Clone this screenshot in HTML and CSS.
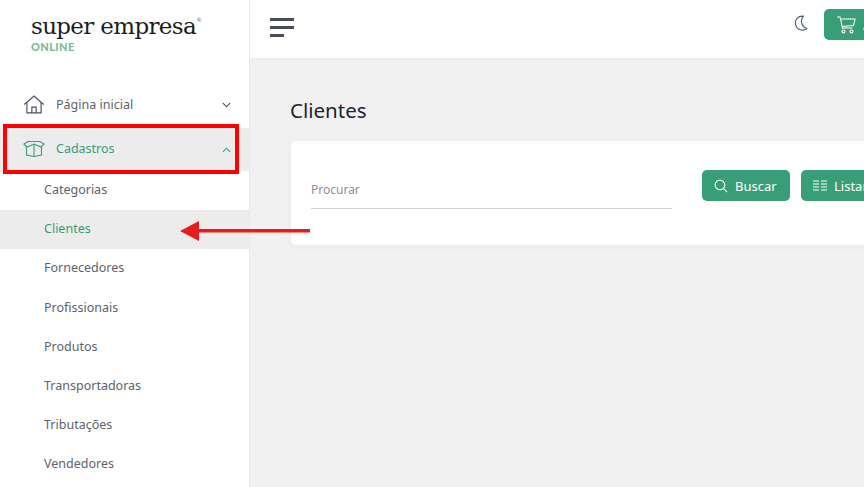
FILE: index.html
```html
<!DOCTYPE html>
<html>

<head>
    <title>Clientes</title>
    <meta charset="utf-8">
    <link rel="stylesheet" href="styles.css">
</head>

<body>

    <aside class="sidebar">
        <div class="logo">
            <div class="logo_nome">super empresa<sup>®</sup></div>
            <div class="logo_sub">ONLINE</div>
        </div>

        <nav class="menu">
            <a class="menu_item inicio">
                <svg class="menu_icon" viewBox="0 0 20 18" fill="none" stroke="#4a4f63" stroke-width="1.1">
                    <path d="M.8 9 10 1l9.200 8" />
                    <path d="M3.300 7v10h13.400V7" />
                    <path d="M8 17v-5.500h4V17" />
                </svg>
                <span>Página inicial</span>
                <svg class="seta" viewBox="0 0 10 6" fill="none" stroke="#444" stroke-width="1.2">
                    <path d="M1 1l4 4 4-4" />
                </svg>
            </a>
            <a class="menu_item aberto">
                <svg class="menu_icon" viewBox="0 0 22 18" fill="none" stroke="#3a9d78" stroke-width="1.1">
                    <path d="M3.500 7v8.500L11 17l7.500-1.500V7" />
                    <path d="M11 4.500V17" />
                    <path d="M1 4.500 5 2h12l4 2.500-3 3-7-3-7 3z" />
                </svg>
                <span>Cadastros</span>
                <svg class="seta" viewBox="0 0 10 6" fill="none" stroke="#3a9d78" stroke-width="1.2">
                    <path d="M1 5l4-4 4 4" />
                </svg>
            </a>
            <a class="sub_item">Categorias</a>
            <a class="sub_item valgt">Clientes</a>
            <a class="sub_item">Fornecedores</a>
            <a class="sub_item">Profissionais</a>
            <a class="sub_item">Produtos</a>
            <a class="sub_item">Transportadoras</a>
            <a class="sub_item">Tributações</a>
            <a class="sub_item">Vendedores</a>
        </nav>
    </aside>

    <div class="conteudo">
        <header class="topo">
            <div class="burger">
                <i></i>
                <i></i>
                <i class="curta"></i>
            </div>
            <svg class="lua" viewBox="0 0 14 16" fill="none" stroke="#4a5a78" stroke-width="1.1">
                <path d="M9.500 1.200A7 7 0 1 0 12.800 13.500 7.500 7.500 0 0 1 9.500 1.200z" />
            </svg>
            <button class="btn btn_carrinho">
                <svg class="btn_icon cart" viewBox="0 0 20 18" fill="none" stroke="#fff" stroke-width="1.1">
                    <path d="M1 1h3l2.500 11h10" />
                    <path d="M4.500 3H19l-1.500 6.500-11 1" />
                    <circle cx="7.500" cy="15.500" r="1.500" />
                    <circle cx="15.500" cy="15.500" r="1.500" />
                </svg>
                Adicionar
            </button>
        </header>

        <main class="principal">
            <h1>Clientes</h1>
            <section class="kort">
                <div class="felt">Procurar</div>
                <button class="btn btn_buscar">
                    <svg class="btn_icon" viewBox="0 0 16 16" fill="none" stroke="#fff" stroke-width="1.2">
                        <circle cx="6.800" cy="6.800" r="5.500" />
                        <path d="M10.800 10.800 15 15" />
                    </svg>
                    Buscar
                </button>
                <button class="btn">
                    <svg class="btn_icon" viewBox="0 0 14 13" fill="none" stroke="#fff" stroke-width="1">
                        <path d="M0 1.500h6M8 1.500h6M0 4.500h6M8 4.500h6M0 7.500h6M8 7.500h6M0 10.500h6M8 10.500h6" />
                    </svg>
                    Listar
                </button>
            </section>
        </main>
    </div>

    <!-- marcacoes vermelhas por cima da tela -->
    <div class="marca"></div>
    <svg class="pil" viewBox="0 0 130 20">
        <path d="M19 8h111v3.500H19z" fill="#e81c1c" />
        <path d="M0 10 19 0v20z" fill="#e81c1c" />
    </svg>

</body>

</html>
```

FILE: styles.css
```css
html,
body {
    margin: 0;
    padding: 0;
    height: 487px;
    overflow: hidden;
}

body {
    display: flex;
    background-color: #f1f1f1;
    font-family: "Noto Sans", sans-serif;
}

.sidebar {
    width: 249px;
    height: 487px;
    flex-shrink: 0;
    background-color: white;
    border-right: 1px solid #e8e8e8;
    overflow: hidden;
}

.logo {
    height: 84px;
    padding: 12px 0 0 31px;
    box-sizing: border-box;
}

.logo_nome {
    font-family: "DejaVu Serif", serif;
    font-size: 23px;
    line-height: 28px;
    letter-spacing: -0.66px;
    color: #1c1c1c;
    white-space: nowrap;
}

.logo_nome sup {
    font-size: 6px;
    line-height: 0;
    vertical-align: 12px;
    color: #777;
}

.logo_sub {
    font-family: "Lato", sans-serif;
    font-size: 11px;
    font-weight: 900;
    line-height: 14px;
    letter-spacing: 0.4px;
    color: #7fb896;
}

.menu_item {
    display: flex;
    align-items: center;
    box-sizing: border-box;
    padding: 0 18px 0 23px;
    font-size: 12.500px;
    color: #5b6270;
}

.menu_item.inicio {
    height: 44px;
    padding-bottom: 4px;
}

.menu_item.aberto {
    height: 43px;
    padding-bottom: 2px;
    color: #3a9d78;
    background-color: #ececec;
}

.menu_item span {
    flex: 1;
    margin-left: 11px;
}

.menu_icon {
    width: 22px;
    height: 19px;
}

.seta {
    width: 9px;
    height: 6px;
    margin-top: 2px;
}

.sub_item {
    display: flex;
    align-items: center;
    box-sizing: border-box;
    height: 39.200px;
    padding: 0 0 2px 44px;
    font-size: 12.500px;
    color: #5b6270;
}

.valgt {
    color: #3a9d78;
    background-color: #ececec;
}

.conteudo {
    flex: 1;
    min-width: 0;
}

.topo {
    display: flex;
    align-items: flex-start;
    width: 700px;
    height: 59px;
    box-sizing: border-box;
    padding-left: 20px;
    background-color: white;
    border-bottom: 1px solid #ebebeb;
}

.burger {
    width: 24px;
    margin: 18px 500px 0 0;
}

.burger i {
    display: block;
    height: 3px;
    margin-bottom: 5px;
    background-color: #4a4f57;
}

.burger i.curta {
    width: 14px;
    margin-bottom: 0;
}

.lua {
    width: 14px;
    height: 16px;
    margin: 15px 16px 0 0;
}

.btn {
    display: flex;
    align-items: center;
    flex-shrink: 0;
    height: 31px;
    padding: 0 12px;
    border: none;
    border-radius: 5px;
    background-color: #389e78;
    color: white;
    font-family: "Noto Sans", sans-serif;
    font-size: 13px;
}

.btn_carrinho {
    margin-top: 9px;
}

.btn_buscar {
    width: 88px;
}

.btn_icon {
    width: 14px;
    height: 14px;
    margin-right: 7px;
}

.cart {
    width: 20px;
    height: 18px;
}

.principal {
    padding: 0 0 0 41px;
}

h1 {
    margin: 0 0 0 -1px;
    padding-top: 38px;
    height: 44px;
    font-size: 20.500px;
    line-height: 26px;
    font-weight: 400;
    color: #1b2430;
}

.kort {
    display: flex;
    align-items: flex-start;
    gap: 11px;
    width: 800px;
    height: 104px;
    box-sizing: border-box;
    padding: 29px 20px 0;
    background-color: white;
    border-radius: 5px;
    box-shadow: 0 2px 10px rgba(0, 0, 0, 0.03);
}

.felt {
    width: 361px;
    height: 39px;
    margin-right: 19px;
    box-sizing: border-box;
    padding-top: 11px;
    border-bottom: 1px solid #ced4da;
    font-size: 12px;
    line-height: 17px;
    color: #8c8f94;
}

.marca {
    position: absolute;
    left: 3px;
    top: 124px;
    width: 228px;
    height: 42px;
    border: 4px solid #ff0000;
}

.pil {
    position: absolute;
    left: 180px;
    top: 221px;
    width: 130px;
    height: 20px;
}
```
